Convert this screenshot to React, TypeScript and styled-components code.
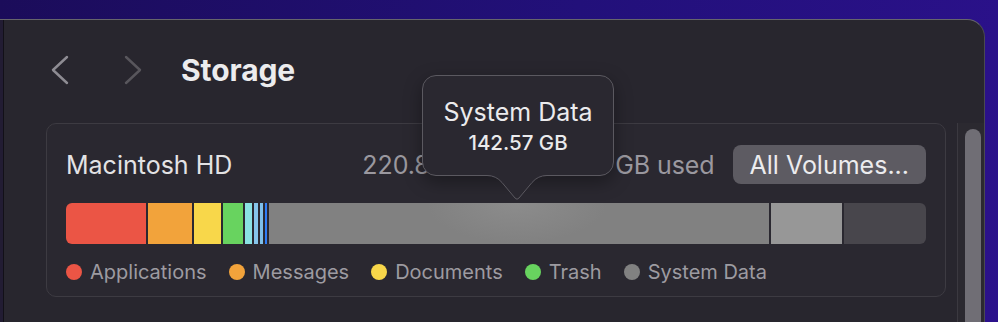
import styled, { createGlobalStyle } from "styled-components";

const GlobalStyle = createGlobalStyle`
  html, body {
    margin: 0;
    padding: 0;
  }
  body {
    width: 998px;
    height: 322px;
    overflow: hidden;
    background: linear-gradient(100deg, #1b0c5a 0%, #22107a 55%, #2b118b 100%);
    font-family: Inter, "Noto Sans", sans-serif;
    -webkit-font-smoothing: antialiased;
  }
`;

type Segment = { color: string; width?: number; grow?: boolean; glow?: boolean };

const segments: Segment[] = [
  { color: "#eb5545", width: 80 },
  { color: "#f2a33b", width: 44 },
  { color: "#f8d74a", width: 27 },
  { color: "#68d35f", width: 20 },
  { color: "#8ae2e3", width: 6.5 },
  { color: "#86c5ea", width: 4 },
  { color: "#7ebfea", width: 3 },
  { color: "#2f7cf6", width: 2 },
  { color: "#818181", grow: true, glow: true },
  { color: "#979797", width: 71 },
  { color: "#48464c", width: 82 },
];

const legend = [
  { color: "#eb5545", label: "Applications" },
  { color: "#f2a33b", label: "Messages" },
  { color: "#f8d74a", label: "Documents" },
  { color: "#68d35f", label: "Trash" },
  { color: "#818181", label: "System Data" },
];

export default function App() {
  return (
    <>
      <GlobalStyle />
      <Page>
        <Window>
          <SideEdge />
          <Main>
            <Header>
              <NavIcon viewBox="0 0 20 32" $color="#8e8c93">
                <polyline points="17,3 3,16 17,29" />
              </NavIcon>
              <NavIcon viewBox="0 0 20 32" $color="#58565c" style={{ marginLeft: 53 }}>
                <polyline points="3,3 17,16 3,29" />
              </NavIcon>
              <Title>Storage</Title>
            </Header>

            <Panel>
              <TopRow>
                <VolumeName>Macintosh HD</VolumeName>
                <UsedText>220.83 GB of 494.38 GB used</UsedText>
                <Button>All Volumes...</Button>
              </TopRow>

              <Bar>
                {segments.map((s, i) => (
                  <BarSegment key={i} $color={s.color} $width={s.width} $grow={s.grow} $glow={s.glow} />
                ))}
              </Bar>

              <Legend>
                {legend.map((l) => (
                  <LegendItem key={l.label}>
                    <Dot $color={l.color} />
                    {l.label}
                  </LegendItem>
                ))}
              </Legend>

              <Tooltip>
                <TooltipTitle>System Data</TooltipTitle>
                <TooltipValue>142.57 GB</TooltipValue>
                <TooltipArrow viewBox="0 0 60 26" width="60" height="26">
                  <path d="M0 0 L60 0 L60 0.5 Q51 0.5 45 7.5 L32 23 Q30 25.5 28 23 L15 7.5 Q9 0.5 0 0.5 Z" fill="#2a2830" />
                  <path
                    d="M0 0.5 Q9 0.5 15 7.5 L28 23 Q30 25.5 32 23 L45 7.5 Q51 0.5 60 0.5"
                    fill="none"
                    stroke="#5b5960"
                    strokeWidth="1"
                  />
                </TooltipArrow>
              </Tooltip>
            </Panel>
          </Main>
          <ScrollTrack>
            <ScrollThumb />
          </ScrollTrack>
        </Window>
      </Page>
    </>
  );
}

const Page = styled.div`
  height: 322px;
  padding-top: 19px;
  box-sizing: border-box;
`;

const Window = styled.div`
  width: 985px;
  height: 303px;
  display: flex;
  box-sizing: border-box;
  background: #28262e;
  border-top: 1px solid #66656b;
  border-right: 1px solid #4a4950;
  border-top-right-radius: 18px;
  overflow: hidden;
`;

const SideEdge = styled.div`
  width: 3px;
  flex-shrink: 0;
  background: #221c33;
  border-right: 1px solid #121018;
`;

const Main = styled.div`
  flex: 1;
  display: flex;
  flex-direction: column;
`;

const Header = styled.div`
  height: 100px;
  display: flex;
  align-items: center;
  padding-left: 46px;
`;

const NavIcon = styled.svg<{ $color: string }>`
  width: 20px;
  height: 32px;
  flex-shrink: 0;
  fill: none;
  stroke: ${(p) => p.$color};
  stroke-width: 2.4;
  stroke-linecap: round;
  stroke-linejoin: round;
`;

const Title = styled.h1`
  margin: 0 0 0 38px;
  font-size: 30px;
  font-weight: 700;
  color: #ececee;
  letter-spacing: -0.1px;
`;

const Panel = styled.div`
  position: relative;
  margin: 3px 11px 0 42px;
  height: 174px;
  box-sizing: border-box;
  padding: 21px 19px 0;
  background: #2a2830;
  border: 1px solid #3d3b42;
  border-radius: 10px;
`;

const TopRow = styled.div`
  display: flex;
  align-items: center;
  height: 39px;
`;

const VolumeName = styled.div`
  flex: 1;
  font-size: 25px;
  color: #e3e3e5;
`;

const UsedText = styled.div`
  font-size: 25px;
  letter-spacing: -0.1px;
  color: #9a989f;
  margin-right: 18px;
`;

const Button = styled.button`
  height: 39px;
  padding: 0 17px;
  border: none;
  border-radius: 8px;
  background: #5d5b62;
  color: #ececee;
  font-family: inherit;
  font-size: 25px;
`;

const Bar = styled.div`
  margin-top: 19px;
  height: 41px;
  display: flex;
  gap: 2px;
  border-radius: 6px;
  overflow: hidden;
`;

const BarSegment = styled.div<{ $color: string; $width?: number; $grow?: boolean; $glow?: boolean }>`
  flex: ${(p) => (p.$grow ? "1 1 auto" : `0 0 ${p.$width}px`)};
  background: ${(p) =>
    p.$glow
      ? `radial-gradient(ellipse 90px 40px at 248px 0, #8c8c8c, ${p.$color})`
      : p.$color};
`;

const Legend = styled.div`
  margin-top: 15px;
  height: 26px;
  display: flex;
  align-items: center;
  gap: 22px;
`;

const LegendItem = styled.div`
  display: flex;
  align-items: center;
  gap: 8px;
  font-size: 20px;
  color: #9d9ba1;
`;

const Dot = styled.span<{ $color: string }>`
  width: 16px;
  height: 16px;
  border-radius: 50%;
  background: ${(p) => p.$color};
`;

const Tooltip = styled.div`
  position: absolute;
  left: 375px;
  top: -49px;
  width: 192px;
  height: 101px;
  box-sizing: border-box;
  padding-top: 21px;
  background: #2a2830;
  border: 1px solid #5b5960;
  border-radius: 14px;
  box-shadow: 0 6px 18px rgba(0, 0, 0, 0.35);
  text-align: center;
`;

const TooltipTitle = styled.div`
  font-size: 25px;
  line-height: 30px;
  color: #ebebed;
`;

const TooltipValue = styled.div`
  margin-top: 4px;
  font-size: 20.5px;
  line-height: 24px;
  font-weight: 500;
  color: #ebebed;
`;

const TooltipArrow = styled.svg`
  position: absolute;
  left: 64px;
  top: 99px;
  display: block;
`;

const ScrollTrack = styled.div`
  width: 27px;
  flex-shrink: 0;
  margin-top: 103px;
  padding: 6px 3px 0 7px;
  box-sizing: border-box;
  background: #2b2930;
  border-left: 1px solid #3b3940;
`;

const ScrollThumb = styled.div`
  width: 16px;
  height: 300px;
  border-radius: 8px;
  background: #706e75;
`;
